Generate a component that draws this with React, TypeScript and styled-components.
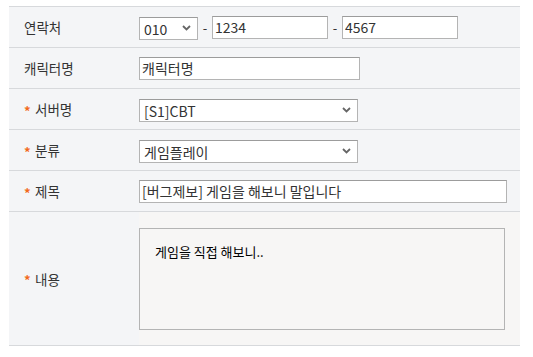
import React from 'react';
import styled, { createGlobalStyle } from 'styled-components';

const GlobalStyle = createGlobalStyle`
  body {
    margin: 0;
    background: #fff;
    font-family: "Noto Sans CJK KR", "Noto Sans", sans-serif;
  }
`;

const Wrapper = styled.div`
  padding: 6px 0 0 9px;
`;

const Table = styled.div`
  width: 511px;
  border-top: 1px solid #d7d9dc;
`;

const Row = styled.div<{ $tall?: boolean }>`
  display: flex;
  height: ${(p) => (p.$tall ? 133 : 40)}px;
  border-bottom: 1px solid #d7d9dc;
  background: #f4f5f7;
`;

const Label = styled.div`
  width: 115px;
  padding-left: 15px;
  display: flex;
  align-items: center;
  font-size: 13.5px;
  color: #333;
`;

const Star = styled.span`
  color: #f26a1b;
  font-size: 13px;
  font-weight: bold;
  width: 11px;
  margin-top: 2px;
`;

const Cell = styled.div<{ $warm?: boolean }>`
  flex: 1;
  display: flex;
  align-items: ${(p) => (p.$warm ? 'flex-start' : 'center')};
  padding-top: ${(p) => (p.$warm ? 16 : 0)}px;
  background: ${(p) => (p.$warm ? '#f7f6f5' : 'transparent')};
`;

const fieldBase = `
  box-sizing: border-box;
  height: 23px;
  border: 1px solid #b4b4b4;
  border-top-color: #9c9c9c;
  background: #fff;
  font-family: "Noto Sans CJK KR", "Noto Sans", sans-serif;
  font-size: 14px;
  color: #333;
  outline: none;
`;

const Input = styled.input<{ $w: number }>`
  ${fieldBase}
  width: ${(p) => p.$w}px;
  padding: 0 2px;
`;

const SelectBox = styled.div<{ $w: number }>`
  position: relative;
  width: ${(p) => p.$w}px;
  height: 23px;
`;

const Select = styled.select`
  ${fieldBase}
  appearance: none;
  width: 100%;
  padding: 0 20px 0 4px;
  border-radius: 0;
`;

const Chevron = styled.svg`
  position: absolute;
  right: 7px;
  top: 9px;
  pointer-events: none;
`;

const Dash = styled.span`
  width: 14px;
  text-align: center;
  font-size: 13px;
  color: #333;
`;

const TextArea = styled.textarea`
  box-sizing: border-box;
  width: 366px;
  height: 102px;
  border: 1px solid #b4b4b4;
  background: transparent;
  padding: 13px 15px;
  resize: none;
  font-family: "Noto Sans CJK KR", "Noto Sans", sans-serif;
  font-size: 13px;
  color: #000;
  outline: none;
`;

const Dropdown = ({ w, value, options }: { w: number; value: string; options: string[] }) => (
  <SelectBox $w={w}>
    <Select defaultValue={value}>
      {options.map((o) => (
        <option key={o}>{o}</option>
      ))}
    </Select>
    <Chevron width="9" height="6" viewBox="0 0 9 6">
      <path d="M1 1l3.5 3.5L8 1" fill="none" stroke="#666" strokeWidth="1.8" />
    </Chevron>
  </SelectBox>
);

export default function App() {
  return (
    <Wrapper>
      <GlobalStyle />
      <Table>
        <Row>
          <Label>연락처</Label>
          <Cell>
            <Dropdown w={59} value="010" options={['010', '011', '016']} />
            <Dash>-</Dash>
            <Input $w={116} defaultValue="1234" />
            <Dash>-</Dash>
            <Input $w={116} defaultValue="4567" />
          </Cell>
        </Row>
        <Row>
          <Label>캐릭터명</Label>
          <Cell>
            <Input $w={221} defaultValue="캐릭터명" />
          </Cell>
        </Row>
        <Row>
          <Label>
            <Star>*</Star>서버명
          </Label>
          <Cell>
            <Dropdown w={219} value="[S1]CBT" options={['[S1]CBT']} />
          </Cell>
        </Row>
        <Row>
          <Label>
            <Star>*</Star>분류
          </Label>
          <Cell>
            <Dropdown w={219} value="게임플레이" options={['게임플레이']} />
          </Cell>
        </Row>
        <Row>
          <Label>
            <Star>*</Star>제목
          </Label>
          <Cell>
            <Input $w={368} defaultValue="[버그제보] 게임을 해보니 말입니다" />
          </Cell>
        </Row>
        <Row $tall>
          <Label>
            <Star>*</Star>내용
          </Label>
          <Cell $warm>
            <TextArea defaultValue="게임을 직접 해보니.." />
          </Cell>
        </Row>
      </Table>
    </Wrapper>
  );
}
